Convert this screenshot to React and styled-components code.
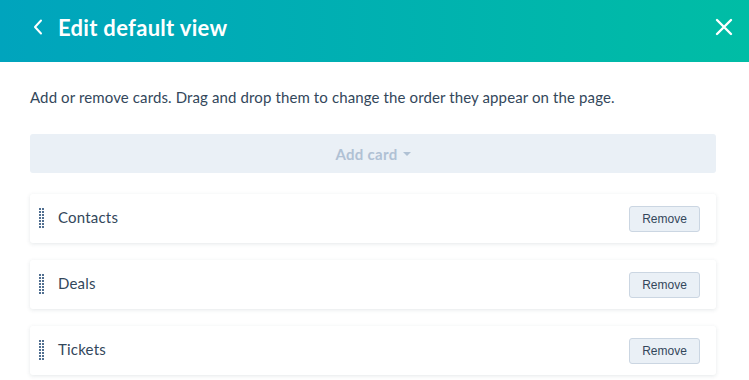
import React from 'react';
import styled, {createGlobalStyle} from 'styled-components';

const cards = ['Contacts', 'Deals', 'Tickets'];

const App = () => {
   return (
      <>
         <GlobalStyle />
         <Panel>
            <Header>
               <TitleGroup>
                  <IconButton aria-label="Back">
                     <svg width="10" height="16" viewBox="0 0 10 16" fill="none">
                        <path d="M8 1.5L2 8l6 6.5" stroke="#fff" strokeWidth="2" strokeLinecap="round" strokeLinejoin="round" />
                     </svg>
                  </IconButton>
                  <Title>Edit default view</Title>
               </TitleGroup>
               <IconButton aria-label="Close">
                  <svg width="18" height="18" viewBox="0 0 18 18" fill="none">
                     <path d="M2 2l14 14M16 2L2 16" stroke="#fff" strokeWidth="2.4" strokeLinecap="round" />
                  </svg>
               </IconButton>
            </Header>

            <Body>
               <Description>Add or remove cards. Drag and drop them to change the order they appear on the page.</Description>
               <AddButton disabled>
                  Add card
                  <Caret />
               </AddButton>

               <CardList>
                  {cards.map(name => (
                     <Card key={name}>
                        <CardLabel>
                           <DragHandle>
                              {Array.from({length: 14}).map((_, i) => <Dot key={i} />)}
                           </DragHandle>
                           <CardName>{name}</CardName>
                        </CardLabel>
                        <RemoveButton>Remove</RemoveButton>
                     </Card>
                  ))}
               </CardList>
            </Body>
         </Panel>
      </>
   );
}

const GlobalStyle = createGlobalStyle`
   html, body {
      margin: 0;
      padding: 0;
      background: #fff;
   }
   body {
      font-family: Lato, "Noto Sans", sans-serif;
      color: #33475b;
   }
`;

const Panel = styled.div`
   width: 749px;
   height: 380px;
   overflow: hidden;
   background: #fff;
`;

const Header = styled.header`
   height: 62px;
   padding: 0 16px 8px 33px;
   display: flex;
   align-items: center;
   justify-content: space-between;
   box-sizing: border-box;
   background: linear-gradient(90deg, #00a4bd 0%, #00bda5 100%);
`;

const TitleGroup = styled.div`
   display: flex;
   align-items: center;
   gap: 15px;
`;

const IconButton = styled.button`
   display: flex;
   align-items: center;
   justify-content: center;
   padding: 0;
   border: 0;
   background: none;
   cursor: pointer;
`;

const Title = styled.h1`
   margin: 0;
   font-size: 22px;
   font-weight: 700;
   color: #fff;
   letter-spacing: 0.3px;
`;

const Body = styled.main`
   padding: 23px 33px 0 30px;
`;

const Description = styled.p`
   margin: 0 0 25px;
   font-size: 15px;
   line-height: 24px;
   color: #33475b;
   letter-spacing: 0.12px;
`;

const AddButton = styled.button`
   width: 100%;
   height: 39px;
   display: flex;
   align-items: center;
   justify-content: center;
   gap: 5px;
   border: 0;
   border-radius: 3px;
   background: #eaf0f6;
   color: #b0c1d4;
   font-family: inherit;
   font-size: 15px;
   font-weight: 700;
   letter-spacing: 0.3px;
`;

const Caret = styled.span`
   width: 0;
   height: 0;
   border-left: 4px solid transparent;
   border-right: 4px solid transparent;
   border-top: 4px solid #b0c1d4;
`;

const CardList = styled.ul`
   margin: 21px 0 0;
   padding: 0;
   list-style: none;
   display: flex;
   flex-direction: column;
   gap: 17px;
`;

const Card = styled.li`
   height: 49px;
   padding: 0 16px 0 9px;
   display: flex;
   align-items: center;
   justify-content: space-between;
   box-sizing: border-box;
   border-radius: 3px;
   background: #fff;
   box-shadow: 0 1px 4px rgba(45, 62, 80, 0.12);
`;

const CardLabel = styled.div`
   display: flex;
   align-items: center;
   gap: 14px;
`;

const DragHandle = styled.div`
   display: grid;
   grid-template-columns: repeat(2, 2px);
   grid-auto-rows: 2px;
   column-gap: 1px;
   row-gap: 1px;
   margin-bottom: 2px;
`;

const Dot = styled.span`
   background: #516f90;
`;

const CardName = styled.span`
   margin-bottom: 3px;
   font-size: 15px;
   color: #33475b;
   letter-spacing: 0.2px;
`;

const RemoveButton = styled.button`
   width: 71px;
   height: 26px;
   padding: 0;
   border: 1px solid #cbd6e2;
   border-radius: 3px;
   background: #eaf0f6;
   color: #33475b;
   font-family: "Liberation Sans", Arial, sans-serif;
   font-size: 12px;
   cursor: pointer;
`;

export default App;
